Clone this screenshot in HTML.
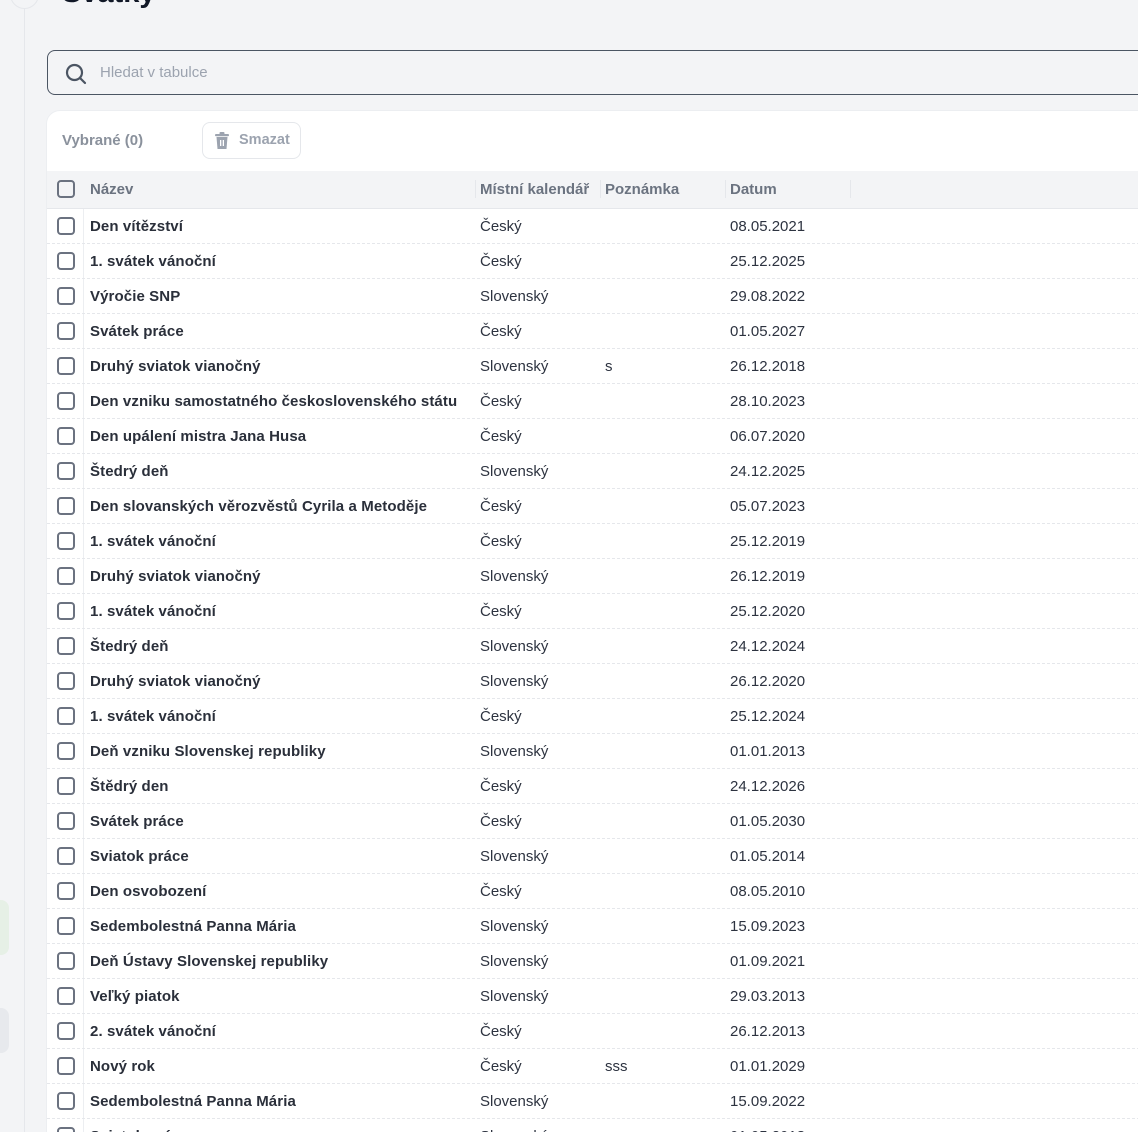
<!DOCTYPE html>
<html><head><meta charset="utf-8"><style>
*{box-sizing:border-box;margin:0;padding:0}
html,body{width:1138px;height:1132px;overflow:hidden}
body{background:#f3f4f6;font-family:"Liberation Sans",sans-serif;position:relative;color:#262b36}
.side{position:absolute;left:0;top:0;width:25px;height:1132px;border-right:1px solid #e5e7eb;background:#f3f4f6}
.circ{position:absolute;left:10px;top:-20px;width:29px;height:29px;border-radius:50%;border:1px solid #e5e7eb;background:#f3f4f6}
.g1{position:absolute;left:-10px;top:900px;width:19px;height:55px;border-radius:8px;background:#e6f0e6}
.g2{position:absolute;left:-10px;top:1008px;width:19px;height:45px;border-radius:8px;background:#e7e9ed}
h1{position:absolute;left:62px;top:-23px;font-size:29px;font-weight:700;color:#111827}
.search{position:absolute;left:47px;top:50px;width:1110px;height:45px;border:1.5px solid #4b5563;border-radius:8px}
.search span{position:absolute;left:52px;top:13px;font-size:15px;color:#9ca3af}
.card{position:absolute;left:46px;top:110px;width:1110px;height:1040px;background:#fff;border:1px solid #eceef1;border-radius:14px;overflow:hidden}
.sel{position:absolute;left:15px;top:21px;font-size:15px;font-weight:700;color:#8a919c}
.btn{position:absolute;left:155px;top:11px;width:99px;height:37px;border:1px solid #e5e7eb;border-radius:8px}
.btn b{position:absolute;left:36px;top:9px;font-size:14.5px;color:#9ca3af}
.head{position:absolute;left:0;top:60px;width:100%;height:38px;background:#f3f4f6;border-bottom:1.5px solid #e5e7eb}
.cb{position:absolute;width:18px;height:18px;border:2px solid #6b7280;border-radius:4px;left:10px}
.hd{position:absolute;top:10px;font-size:15px;font-weight:700;color:#6b7380}
.sep{position:absolute;top:9px;width:1px;height:18px;background:#e5e7eb}
.vl{position:absolute;left:36px;top:98px;width:1px;height:960px;background:#eceef1}
.row{position:absolute;left:0;width:100%;height:35px;border-bottom:1px dashed #e5e7eb}
.row .cb{top:8px}
.row .n{position:absolute;left:43px;top:9px;font-size:15px;font-weight:700;color:#2a2f3a;letter-spacing:.1px}
.row .c{position:absolute;top:9px;font-size:15px;color:#2d3340}
</style></head><body>
<div class="side"><div class="circ"></div><div class="g1"></div><div class="g2"></div></div>
<h1>Svátky</h1>
<div class="search"><svg style="position:absolute;left:16px;top:11px" width="24" height="24" viewBox="0 0 24 24" fill="none" stroke="#4b5563" stroke-width="2.2" stroke-linecap="round"><circle cx="10.5" cy="10.5" r="7.5"/><path d="M16 16l5 5"/></svg><span>Hledat v tabulce</span></div>
<div class="card">
<div class="sel">Vybrané (0)</div>
<div class="btn"><svg style="position:absolute;left:11px;top:9px" width="16" height="18" viewBox="0 0 16 18" fill="#9ca3af"><rect x="1" y="2" width="14" height="2.2" rx="1"/><rect x="5.5" y="0" width="5" height="2.5" rx="1"/><path d="M2.5 5h11l-1 12h-9z"/><rect x="6" y="8" width="1.3" height="6" fill="#fff"/><rect x="8.7" y="8" width="1.3" height="6" fill="#fff"/></svg><b>Smazat</b></div>
<div class="head"><div class="cb" style="top:9px"></div>
<div class="hd" style="left:43px">Název</div>
<div class="sep" style="left:428px"></div><div class="hd" style="left:433px">Místní kalendář</div>
<div class="sep" style="left:553px"></div><div class="hd" style="left:558px">Poznámka</div>
<div class="sep" style="left:678px"></div><div class="hd" style="left:683px">Datum</div>
<div class="sep" style="left:803px"></div></div>
<div class="vl"></div>
<div id="rows"></div>
</div>
<script>
var d=[["Den vítězství","Český","","08.05.2021"],["1. svátek vánoční","Český","","25.12.2025"],["Výročie SNP","Slovenský","","29.08.2022"],["Svátek práce","Český","","01.05.2027"],["Druhý sviatok vianočný","Slovenský","s","26.12.2018"],["Den vzniku samostatného československého státu","Český","","28.10.2023"],["Den upálení mistra Jana Husa","Český","","06.07.2020"],["Štedrý deň","Slovenský","","24.12.2025"],["Den slovanských věrozvěstů Cyrila a Metoděje","Český","","05.07.2023"],["1. svátek vánoční","Český","","25.12.2019"],["Druhý sviatok vianočný","Slovenský","","26.12.2019"],["1. svátek vánoční","Český","","25.12.2020"],["Štedrý deň","Slovenský","","24.12.2024"],["Druhý sviatok vianočný","Slovenský","","26.12.2020"],["1. svátek vánoční","Český","","25.12.2024"],["Deň vzniku Slovenskej republiky","Slovenský","","01.01.2013"],["Štědrý den","Český","","24.12.2026"],["Svátek práce","Český","","01.05.2030"],["Sviatok práce","Slovenský","","01.05.2014"],["Den osvobození","Český","","08.05.2010"],["Sedembolestná Panna Mária","Slovenský","","15.09.2023"],["Deň Ústavy Slovenskej republiky","Slovenský","","01.09.2021"],["Veľký piatok","Slovenský","","29.03.2013"],["2. svátek vánoční","Český","","26.12.2013"],["Nový rok","Český","sss","01.01.2029"],["Sedembolestná Panna Mária","Slovenský","","15.09.2022"],["Sviatok práce","Slovenský","","01.05.2018"]];
var h="";d.forEach(function(r,i){h+='<div class="row" style="top:'+(98+i*35)+'px"><div class="cb"></div><div class="n">'+r[0]+'</div><div class="c" style="left:433px">'+r[1]+'</div><div class="c" style="left:558px">'+r[2]+'</div><div class="c" style="left:683px">'+r[3]+'</div></div>'});
document.getElementById("rows").innerHTML=h;
</script>
</body></html>
